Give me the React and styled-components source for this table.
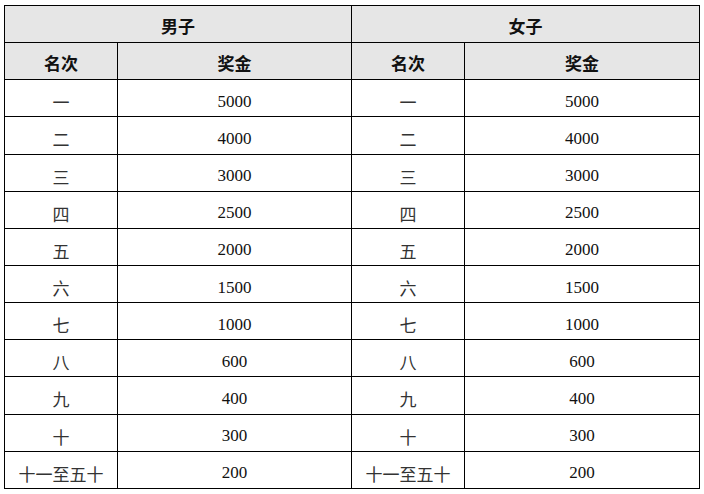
import React from "react";
import styled, { createGlobalStyle } from "styled-components";

const GlobalStyle = createGlobalStyle`
  html, body {
    margin: 0;
    padding: 0;
    background: #fff;
  }
  body {
    font-family: "Liberation Serif", "Noto Sans CJK SC", serif;
  }
`;

const Page = styled.div`
  padding: 5px 4px 0;
`;

const Table = styled.table`
  width: 695px;
  border-collapse: collapse;
  table-layout: fixed;
  color: #111;
  font-size: 17px;
`;

const HeadCell = styled.th`
  height: 37.15px;
  padding: 3px 0 0;
  box-sizing: border-box;
  border: 1px solid #000;
  background: #e6e6e6;
  font-weight: bold;
  font-size: 17px;
  text-align: center;
  vertical-align: middle;
`;

const Cell = styled.td`
  height: 37.15px;
  padding: 7px 0 0;
  box-sizing: border-box;
  border: 1px solid #000;
  text-align: center;
  vertical-align: middle;
  font-size: 17px;
  color: ${(p) => (p.$rank ? "#333" : "#111")};
`;

const rows = [
  ["一", "5000"],
  ["二", "4000"],
  ["三", "3000"],
  ["四", "2500"],
  ["五", "2000"],
  ["六", "1500"],
  ["七", "1000"],
  ["八", "600"],
  ["九", "400"],
  ["十", "300"],
  ["十一至五十", "200"],
];

const App = () => {
  return (
    <Page>
      <GlobalStyle />
      <Table>
        <colgroup>
          <col style={{ width: 113 }} />
          <col style={{ width: 234 }} />
          <col style={{ width: 113 }} />
          <col style={{ width: 235 }} />
        </colgroup>
        <thead>
          <tr>
            <HeadCell colSpan={2}>男子</HeadCell>
            <HeadCell colSpan={2}>女子</HeadCell>
          </tr>
          <tr>
            <HeadCell>名次</HeadCell>
            <HeadCell>奖金</HeadCell>
            <HeadCell>名次</HeadCell>
            <HeadCell>奖金</HeadCell>
          </tr>
        </thead>
        <tbody>
          {rows.map(([rank, prize], index) => (
            <tr key={index}>
              <Cell $rank>{rank}</Cell>
              <Cell>{prize}</Cell>
              <Cell $rank>{rank}</Cell>
              <Cell>{prize}</Cell>
            </tr>
          ))}
        </tbody>
      </Table>
    </Page>
  );
};

export default App;
